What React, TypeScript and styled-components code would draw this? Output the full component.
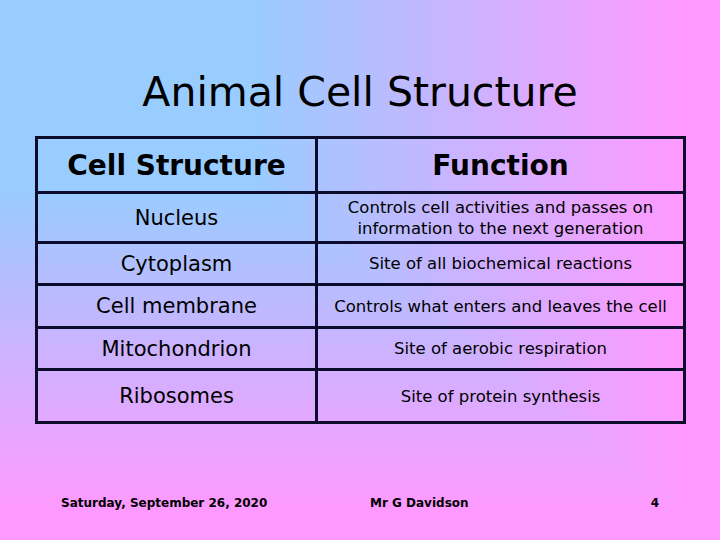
import React from "react";
import styled, { createGlobalStyle } from "styled-components";

const Global = createGlobalStyle`
  html, body { margin: 0; padding: 0; }
  body { font-family: "DejaVu Sans", "Liberation Sans", sans-serif; color: #000; }
`;

const Slide = styled.div`
  position: relative;
  isolation: isolate;
  width: 720px;
  height: 540px;
  overflow: hidden;
  background: linear-gradient(to bottom, #99ccff 35%, #ff99ff 95%);
  display: flex;
  flex-direction: column;
  &::before {
    content: "";
    position: absolute;
    inset: 0;
    z-index: -1;
    background: linear-gradient(to right, #99ccff 35%, #ff99ff 95%);
    clip-path: polygon(0 0, 100% 0, 100% 100%);
  }
`;

const Title = styled.h1`
  margin: 0;
  padding: 68px 0 20px;
  height: 136px;
  box-sizing: border-box;
  font-weight: normal;
  font-size: 41px;
  line-height: 48px;
  text-align: center;
  color: #000;
`;

const Table = styled.div`
  margin-left: 35px;
  width: 651px;
  box-sizing: border-box;
  border: 3px solid #0b0b2b;
  display: grid;
  grid-template-columns: 280px 1fr;
`;

const Cell = styled.div<{ $h: number; $last?: boolean; $left?: boolean }>`
  box-sizing: border-box;
  height: ${(p) => p.$h}px;
  border-bottom: ${(p) => (p.$last ? "none" : "3px solid #0b0b2b")};
  border-right: ${(p) => (p.$left ? "3px solid #0b0b2b" : "none")};
  display: flex;
  align-items: center;
  justify-content: center;
  text-align: center;
`;

const Head = styled.span`
  font-weight: bold;
  font-size: 28px;
`;

const Name = styled.span`
  font-size: 21px;
`;

const Func = styled.span`
  font-size: 16.5px;
  line-height: 21px;
`;

const Footer = styled.div`
  margin-top: auto;
  height: 74px;
  padding: 0 61px;
  display: grid;
  grid-template-columns: 309px 1fr auto;
  align-items: center;
  font-weight: bold;
  font-size: 12px;
`;

const rows: { name: string; fn: React.ReactNode; h: number }[] = [
  { name: "Nucleus", fn: <>Controls cell activities and passes on<br />information to the next generation</>, h: 50 },
  { name: "Cytoplasm", fn: "Site of all biochemical reactions", h: 42 },
  { name: "Cell membrane", fn: "Controls what enters and leaves the cell", h: 43 },
  { name: "Mitochondrion", fn: "Site of aerobic respiration", h: 42 },
  { name: "Ribosomes", fn: "Site of protein synthesis", h: 50 },
];

export default function App() {
  return (
    <>
      <Global />
      <Slide>
        <Title>Animal Cell Structure</Title>
        <Table>
          <Cell $h={55} $left><Head>Cell Structure</Head></Cell>
          <Cell $h={55}><Head>Function</Head></Cell>
          {rows.map((r, i) => {
            const last = i === rows.length - 1;
            return (
              <React.Fragment key={r.name}>
                <Cell $h={r.h} $left $last={last}><Name>{r.name}</Name></Cell>
                <Cell $h={r.h} $last={last}><Func>{r.fn}</Func></Cell>
              </React.Fragment>
            );
          })}
        </Table>
        <Footer>
          <span>Saturday, September 26, 2020</span>
          <span>Mr G Davidson</span>
          <span>4</span>
        </Footer>
      </Slide>
    </>
  );
}
